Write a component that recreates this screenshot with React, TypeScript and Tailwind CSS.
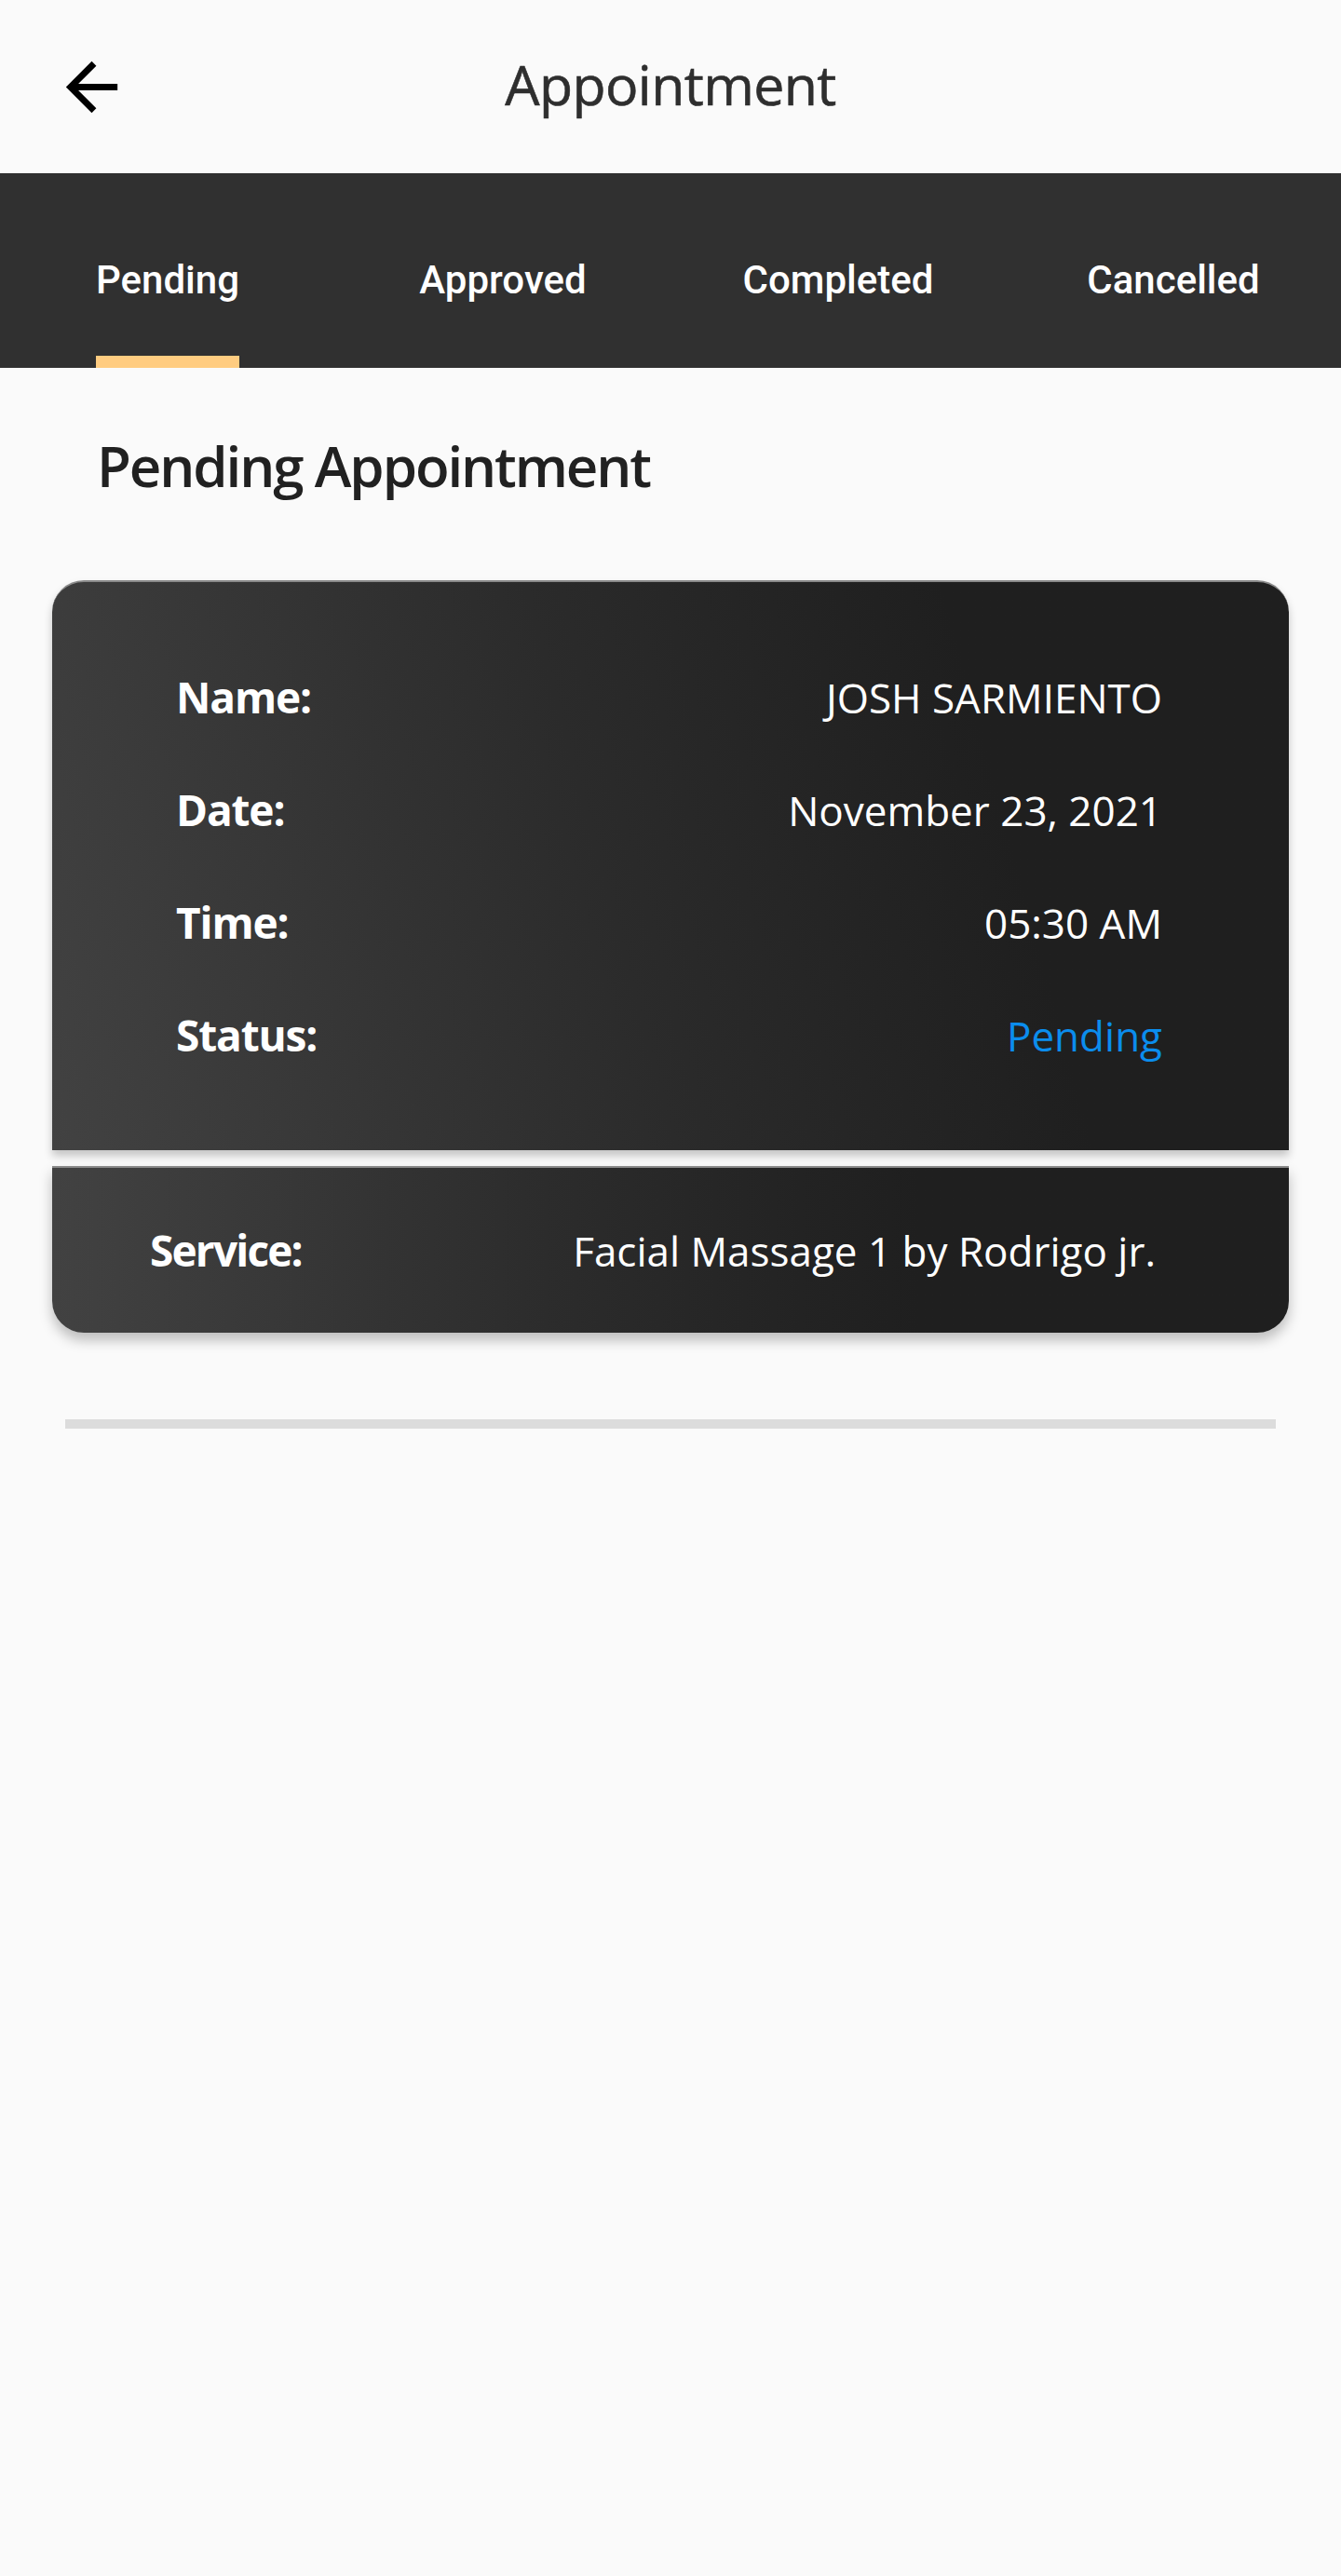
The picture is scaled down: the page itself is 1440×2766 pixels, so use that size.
import React from 'react';

const tabs = ['Pending', 'Approved', 'Completed', 'Cancelled'];

const rows = [
  { label: 'Name:', value: 'JOSH SARMIENTO' },
  { label: 'Date:', value: 'November 23, 2021' },
  { label: 'Time:', value: '05:30 AM' },
  { label: 'Status:', value: 'Pending', accent: true },
];

function BackArrow() {
  return (
    <svg viewBox="0 0 24 24" className="w-[83px] h-[83px]" fill="#000">
      <path d="M20 11H7.83l5.59-5.59L12 4l-8 8 8 8 1.41-1.41L7.83 13H20v-2z" />
    </svg>
  );
}

export default function App() {
  return (
    <div className="min-h-[2766px] w-full bg-[#fafafa] font-['Open_Sans',sans-serif]">
      {/* app bar */}
      <header className="h-[186px] grid grid-cols-[1fr_auto_1fr] items-center">
        <button className="pl-[57px] flex items-center">
          <BackArrow />
        </button>
        <h1 className="pb-[5px] text-[59px] leading-none text-[#2e2e2e] tracking-[-0.01em] [-webkit-text-stroke:0.6px_#2e2e2e]">
          Appointment
        </h1>
        <div />
      </header>

      {/* tabs */}
      <nav className="h-[209px] bg-[#303030] grid grid-cols-4">
        {tabs.map((t, i) => (
          <div key={t} className="flex justify-center">
            <div className="flex flex-col h-full">
              <span className="mt-[89px] leading-[52px] text-[42px] font-medium text-white font-['Roboto',sans-serif]">
                {t}
              </span>
              {i === 0 && <div className="mt-auto h-[13px] w-full bg-[#ffcc80]" />}
            </div>
          </div>
        ))}
      </nav>

      <h2 className="mt-[65px] ml-[104px] leading-[80px] text-[60px] font-semibold text-[#212121] tracking-[-0.035em]">
        Pending Appointment
      </h2>

      {/* appointment card */}
      <div className="mt-[83px] mx-[56px]">
        <div className="rounded-t-[34px] border-t-2 border-[#8a8a8a] bg-linear-75 from-[#424242] via-[#2b2b2b] via-45% to-[#1f1f1f] to-75% pl-[133px] pr-[136px] py-[63px] shadow-[0_6px_10px_rgba(0,0,0,0.22)]">
          {rows.map((r) => (
            <div key={r.label} className="h-[121px] flex items-center justify-between">
              <span className="text-[46px] font-bold text-white tracking-[-0.025em]">{r.label}</span>
              <span className={r.accent ? 'text-[44px] text-[#0b8ded]' : 'text-[44px] text-white'}>
                {r.value}
              </span>
            </div>
          ))}
        </div>

        <div className="mt-[17px] h-[179px] rounded-b-[34px] border-t-2 border-[#8a8a8a] bg-linear-to-r from-[#424242] via-[#2c2c2c] via-40% to-[#1f1f1f] to-70% pl-[105px] pr-[143px] flex items-center justify-between shadow-[0_8px_14px_rgba(0,0,0,0.25)]">
          <span className="text-[46px] font-bold text-white tracking-[-0.04em]">Service:</span>
          <span className="text-[44px] text-white">Facial Massage 1 by Rodrigo jr.</span>
        </div>
      </div>

      <div className="mt-[93px] mx-[70px] h-[10px] bg-[#dcdcdc]" />
    </div>
  );
}
